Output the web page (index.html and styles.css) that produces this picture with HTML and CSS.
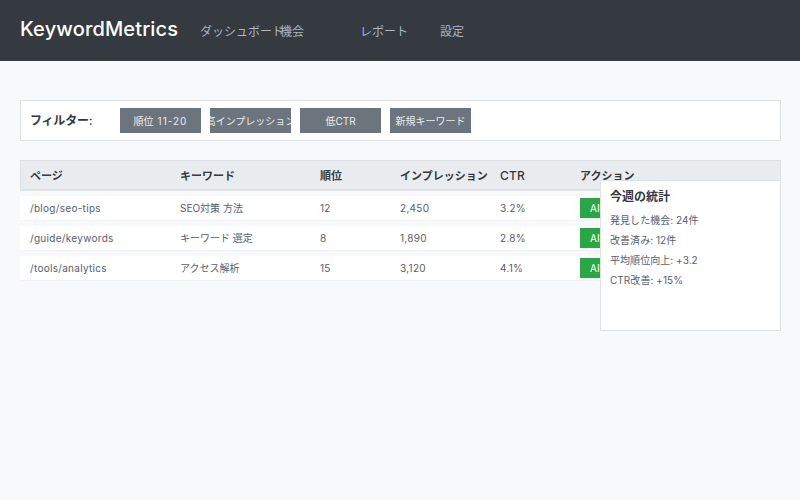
FILE: index.html
```html
<!DOCTYPE html>
<html lang="ja">
<head>
<meta charset="utf-8">
<title>KeywordMetrics</title>
<link rel="stylesheet" href="styles.css">
</head>
<body>
<header class="topbar">
  <div class="logo">KeywordMetrics</div>
  <nav class="nav">
    <a class="nav-item">ダッシュボード</a>
    <a class="nav-item">機会</a>
    <a class="nav-item">レポート</a>
    <a class="nav-item">設定</a>
  </nav>
</header>
<main class="content">
  <section class="filters">
    <div class="filter-label">フィルター:</div>
    <div class="chip">順位 <span class="chip-num">11-20</span></div>
    <div class="chip">高インプレッション</div>
    <div class="chip">低CTR</div>
    <div class="chip">新規キーワード</div>
  </section>
  <section class="table">
    <div class="row head">
      <div>ページ</div><div>キーワード</div><div>順位</div><div>インプレッション</div><div class="head-ctr">CTR</div><div>アクション</div>
    </div>
    <div class="row">
      <div class="latin">/blog/seo-tips</div><div class="cjk">SEO対策 方法</div><div class="latin">12</div><div class="latin">2,450</div><div class="latin">3.2%</div><div><span class="btn">AI提案</span></div>
    </div>
    <div class="row">
      <div class="latin">/guide/keywords</div><div class="cjk">キーワード 選定</div><div class="latin">8</div><div class="latin">1,890</div><div class="latin">2.8%</div><div><span class="btn">AI提案</span></div>
    </div>
    <div class="row">
      <div class="latin">/tools/analytics</div><div class="cjk">アクセス解析</div><div class="latin">15</div><div class="latin">3,120</div><div class="latin">4.1%</div><div><span class="btn">AI提案</span></div>
    </div>
    <aside class="stats">
      <h3 class="stats-title">今週の統計</h3>
      <p>発見した機会: 24件</p>
      <p>改善済み: 12件</p>
      <p>平均順位向上: +3.2</p>
      <p>CTR改善: +15%</p>
    </aside>
  </section>
</main>
</body>
</html>
```
FILE: styles.css
```css
* { box-sizing: border-box; }
html, body { margin: 0; height: 100%; }
body {
  background: #f8f9fa;
  color: #343a40;
  font-family: Inter, "Noto Sans CJK JP", sans-serif;
  overflow: hidden;
}
.topbar {
  height: 61px;
  background: #343a40;
  display: flex;
  align-items: center;
  padding: 0 20px;
}
.logo {
  width: 180px;
  margin-bottom: 3px;
  color: #fff;
  font-size: 20px;
  font-weight: 500;
  letter-spacing: 0.15px;
}
.nav { display: flex; color: #adb5bd; font-size: 12px; }
.nav-item { width: 80px; white-space: nowrap; }
.content { padding: 39px 19px 0 20px; }
.filters {
  height: 41px;
  background: #fff;
  border: 1px solid #dee2e6;
  display: flex;
  align-items: center;
  padding: 0 9px;
}
.filter-label {
  width: 90px;
  margin-bottom: 3px;
  font-size: 12px;
  font-weight: 600;
  letter-spacing: -0.2px;
  color: #343a40;
}
.chip {
  width: 81px;
  height: 25px;
  margin-right: 9px;
  background: #6c757d;
  color: #e9ecef;
  font-size: 10px;
  display: flex;
  gap: 4px;
  align-items: center;
  justify-content: center;
  white-space: nowrap;
  overflow: hidden;
}
.chip-num { letter-spacing: 1px; }
.latin { letter-spacing: 0.3px; }
.cjk { margin-bottom: 2px; }
.table { position: relative; margin-top: 19px; }
.row {
  display: grid;
  grid-template-columns: 150px 140px 80px 100px 80px 1fr;
  height: 25px;
  margin-bottom: 5px;
  padding-left: 10px;
  align-items: center;
  background: #fff;
  border-bottom: 1px solid #f1f3f5;
  font-size: 10px;
  color: #56606a;
}
.row.head {
  height: 31px;
  background: #e9ecef;
  border: 1px solid #dee2e6;
  border-bottom-width: 2px;
  padding-left: 9px;
  font-size: 11px;
  font-weight: 600;
  color: #343a40;
}
.head-ctr { font-size: 12px; font-weight: 500; letter-spacing: 0.2px; }
.btn {
  display: block;
  width: 60px;
  height: 20px;
  line-height: 20px;
  padding-left: 10px;
  background: #28a745;
  color: #fff;
}
.stats {
  position: absolute;
  top: 20px;
  right: 0;
  width: 181px;
  height: 151px;
  background: #fff;
  border: 1px solid #dee2e6;
  padding: 8px 9px;
}
.stats-title {
  margin: 0 0 9px;
  font-size: 12px;
  font-weight: 600;
  line-height: 15px;
}
.stats p {
  margin: 0 0 5px;
  font-size: 10px;
  line-height: 15px;
  letter-spacing: 0.05px;
  color: #56606a;
}
```
